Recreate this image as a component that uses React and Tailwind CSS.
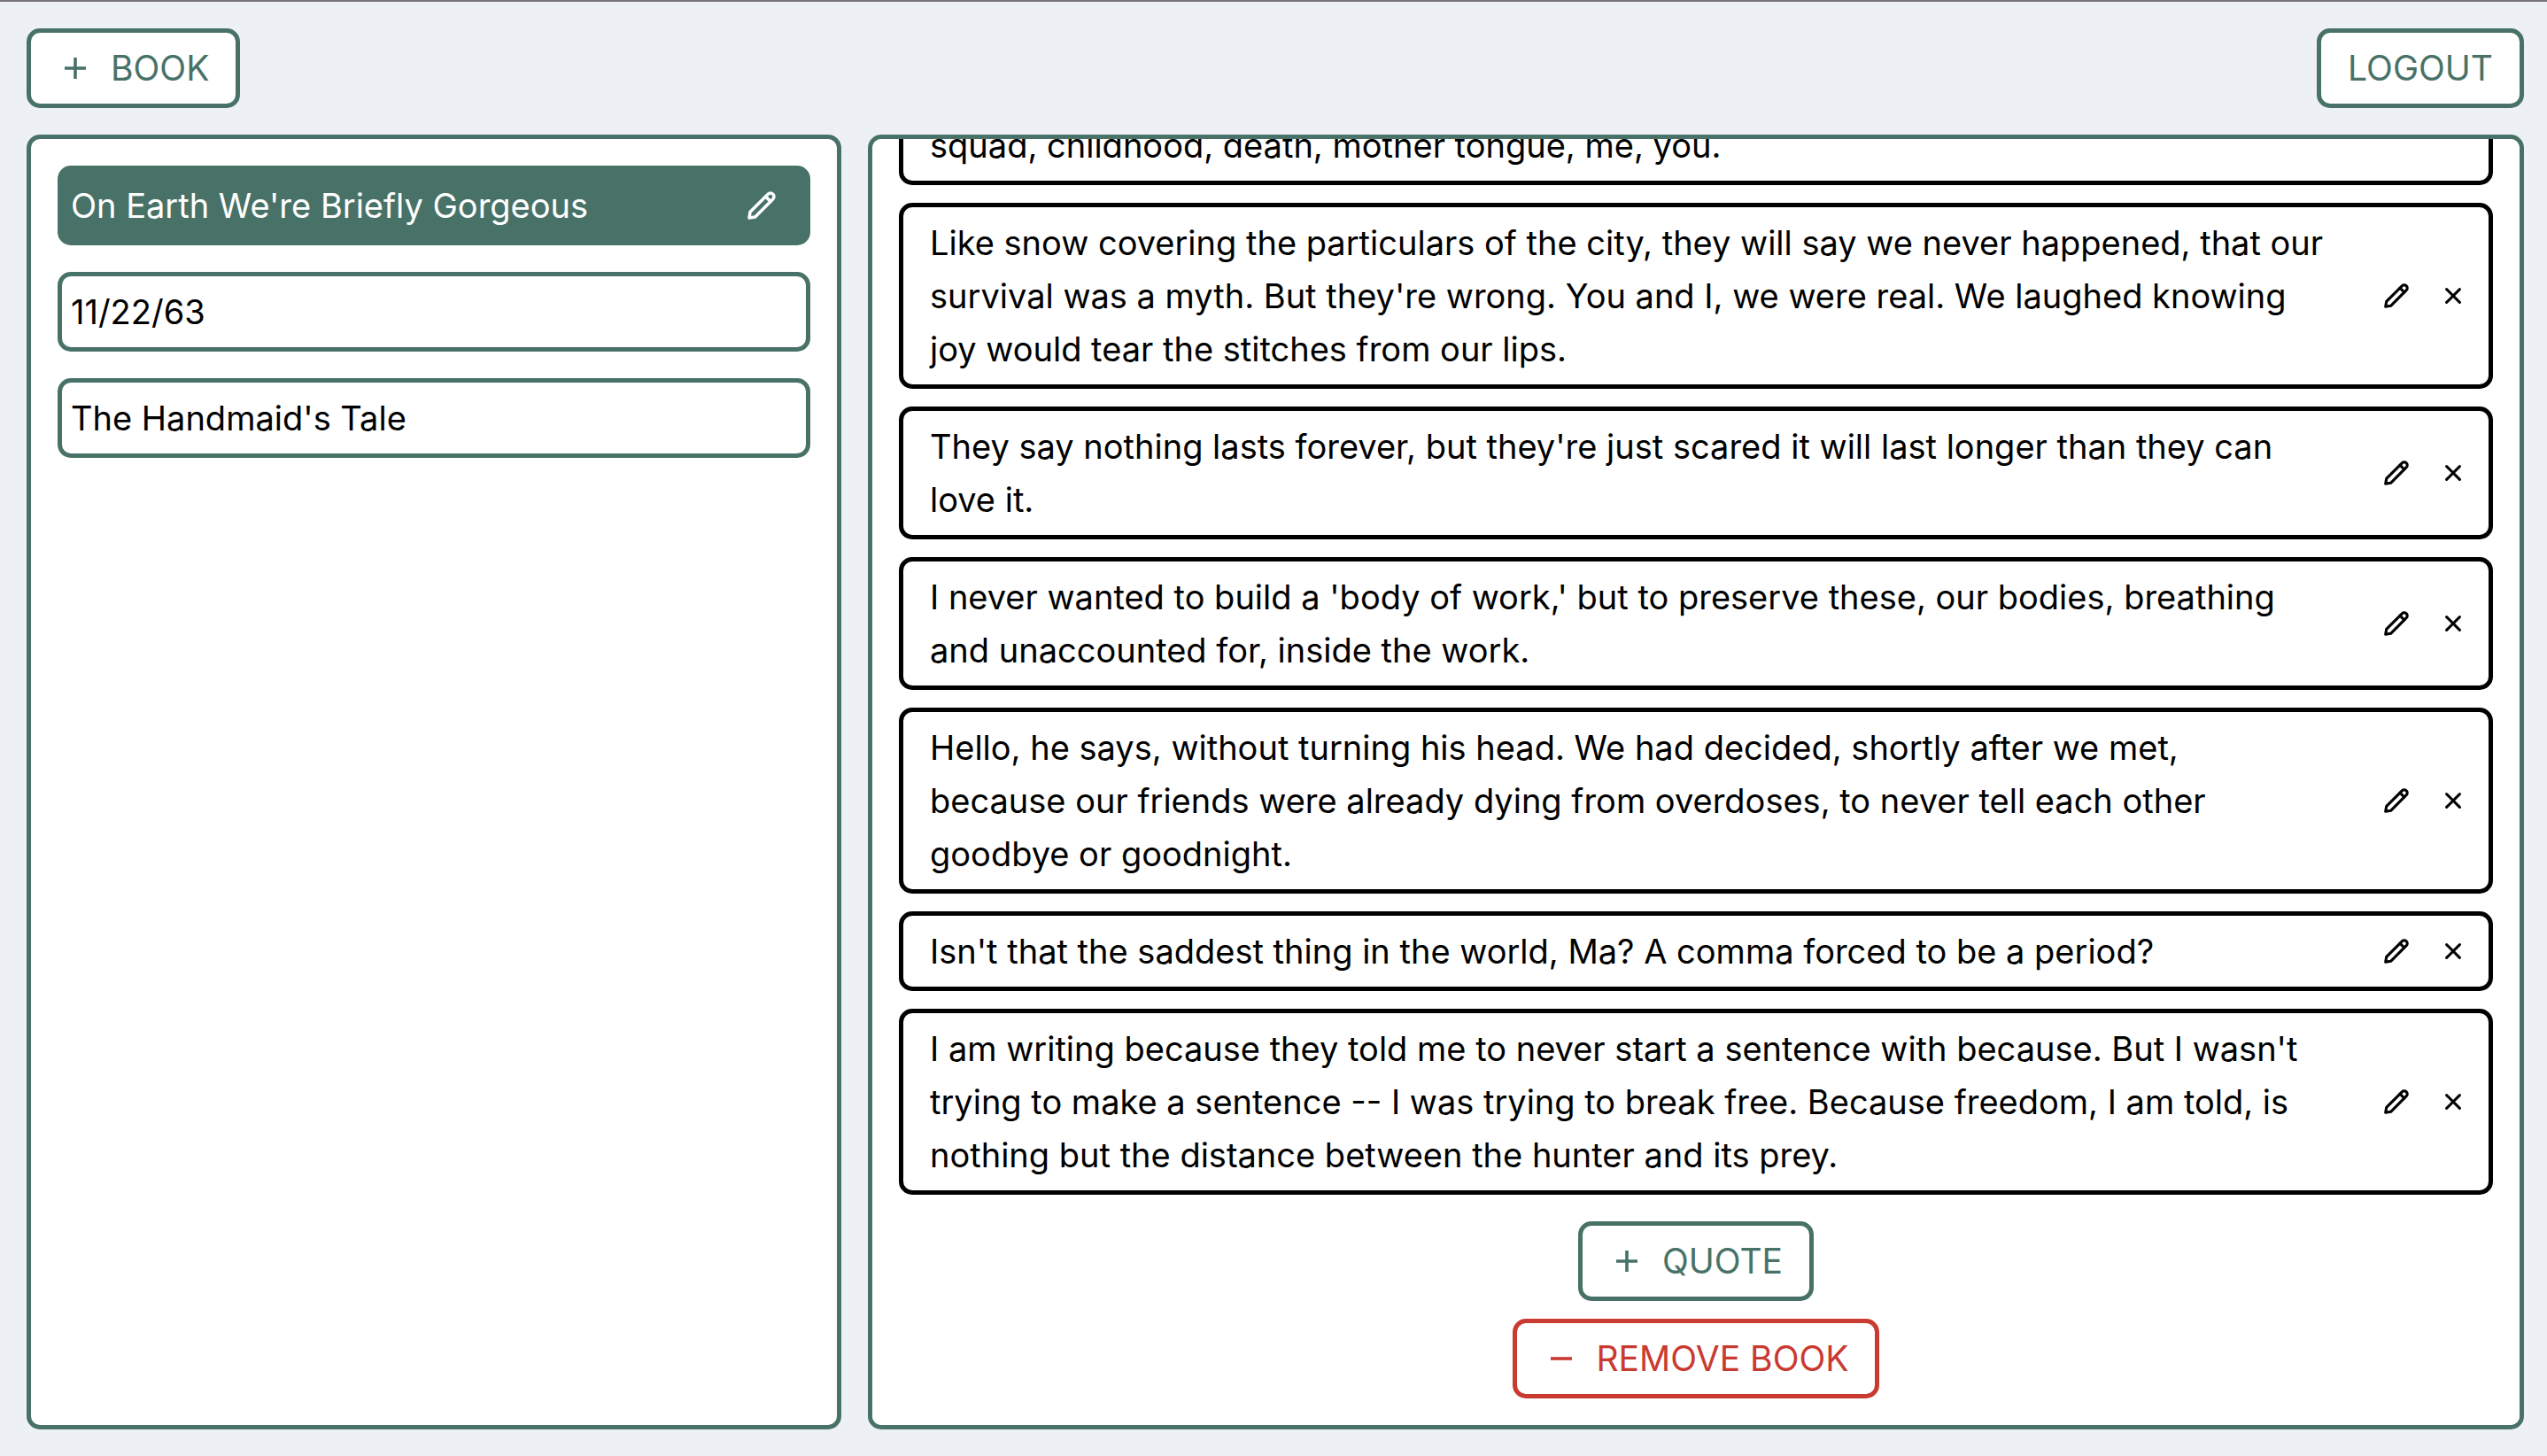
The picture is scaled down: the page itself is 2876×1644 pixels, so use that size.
const books = [
  { title: "On Earth We're Briefly Gorgeous", selected: true },
  { title: "11/22/63" },
  { title: "The Handmaid's Tale" },
];

const quotes = [
  { text: "squad, childhood, death, mother tongue, me, you.", tall: true },
  { text: "Like snow covering the particulars of the city, they will say we never happened, that our survival was a myth. But they're wrong. You and I, we were real. We laughed knowing joy would tear the stitches from our lips." },
  { text: "They say nothing lasts forever, but they're just scared it will last longer than they can love it." },
  { text: "I never wanted to build a 'body of work,' but to preserve these, our bodies, breathing and unaccounted for, inside the work." },
  { text: "Hello, he says, without turning his head. We had decided, shortly after we met,\nbecause our friends were already dying from overdoses, to never tell each other goodbye or goodnight." },
  { text: "Isn't that the saddest thing in the world, Ma? A comma forced to be a period?" },
  { text: "I am writing because they told me to never start a sentence with because. But I wasn't trying to make a sentence -- I was trying to break free. Because freedom, I am told, is nothing but the distance between the hunter and its prey." },
];

function Pencil({ className }) {
  return (
    <svg viewBox="0 0 28 28" className={className} fill="none" stroke="currentColor" strokeWidth="3.1" strokeLinejoin="round" strokeLinecap="round" aria-hidden="true">
      <path d="M1.7 26.3 L2.7 20.4 L20.3 2.8 A3.4 3.4 0 0 1 25.2 7.7 L7.6 25.3 Z" />
      <path d="M18 5.2 L22.8 10" />
    </svg>
  );
}

function Cross() {
  return (
    <svg viewBox="0 0 18 18" className="size-[18px]" fill="none" stroke="currentColor" strokeWidth="3" strokeLinecap="round" aria-hidden="true">
      <path d="M1.6 1.6 L16.4 16.4 M16.4 1.6 L1.6 16.4" />
    </svg>
  );
}

function Sign({ d }) {
  return (
    <svg viewBox="0 0 24 24" className="ml-2 mr-7 size-6" fill="none" stroke="currentColor" strokeWidth="3.6" aria-hidden="true">
      <path d={d} />
    </svg>
  );
}

function OutlineButton({ sign, danger, children }) {
  return (
    <button
      type="button"
      className={`flex items-center rounded-[15px] border-5 bg-white px-[30px] py-2.5 text-[39px] leading-[60px] ${danger ? "border-[#c93a31] text-[#c93a31]" : "border-[#487267] text-[#487267]"}`}
    >
      {sign && <Sign d={sign} />}
      {children}
    </button>
  );
}

function Book({ title, selected }) {
  return (
    <li
      className={`flex items-center justify-between rounded-[15px] border-5 border-[#487267] py-2.5 pl-2.5 pr-[30px] ${selected ? "bg-[#487267] text-white" : "bg-white"}`}
    >
      <a href="#">{title}</a>
      {selected && (
        <button type="button" aria-label="Edit book" className="flex size-10 items-center justify-center">
          <Pencil className="size-8" />
        </button>
      )}
    </li>
  );
}

function Quote({ text, tall }) {
  return (
    <li className={`flex items-center rounded-[15px] border-5 border-black py-2.5 pl-[30px] pr-5 ${tall ? "min-h-[270px]" : ""}`}>
      <p className={`flex-1 whitespace-pre-line ${tall ? "self-end" : ""}`}>{text}</p>
      <div className="ml-[52px] flex gap-6">
        <button type="button" aria-label="Edit quote" className="flex size-10 items-center justify-center">
          <Pencil className="size-7" />
        </button>
        <button type="button" aria-label="Delete quote" className="flex size-10 items-center justify-center">
          <Cross />
        </button>
      </div>
    </li>
  );
}

const PLUS = "M12 0 V24 M0 12 H24";
const MINUS = "M0 12 H24";

export default function App() {
  return (
    <div className="flex h-screen flex-col gap-[30px] border-t-2 border-[#777577] bg-[#edf1f5] pb-[30px] pl-[30px] pr-[26px] pt-[30px] font-[Inter,sans-serif] text-[38px] leading-[60px] text-black">
      <header className="flex justify-between">
        <OutlineButton sign={PLUS}>BOOK</OutlineButton>
        <OutlineButton>LOGOUT</OutlineButton>
      </header>
      <main className="grid min-h-0 flex-1 grid-cols-[92fr_187fr] gap-[30px]">
        <nav aria-label="Books" className="rounded-[15px] border-5 border-[#487267] bg-white p-[30px]">
          <ul className="flex flex-col gap-[30px]">
            {books.map((b) => (
              <Book key={b.title} {...b} />
            ))}
          </ul>
        </nav>
        <section aria-label="Quotes" className="flex min-h-0 flex-col-reverse overflow-y-auto rounded-[15px] border-5 border-[#487267] bg-white [scrollbar-width:none]">
          <div className="p-[30px]">
            <ul className="flex flex-col gap-5">
              {quotes.map((q) => (
                <Quote key={q.text} {...q} />
              ))}
            </ul>
            <div className="mt-[30px] flex flex-col items-center gap-5">
              <OutlineButton sign={PLUS}>QUOTE</OutlineButton>
              <OutlineButton sign={MINUS} danger>REMOVE BOOK</OutlineButton>
            </div>
          </div>
        </section>
      </main>
    </div>
  );
}
